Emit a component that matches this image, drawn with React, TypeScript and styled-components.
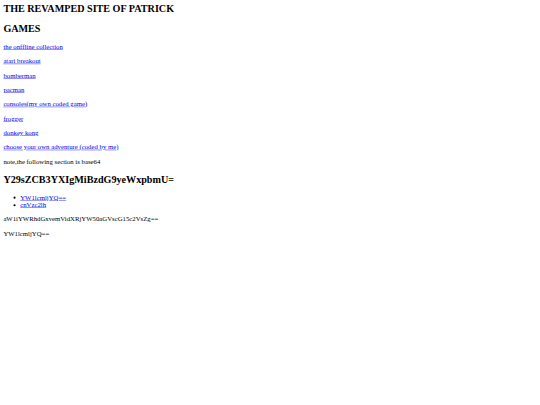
import React from 'react';
import styled, { createGlobalStyle } from 'styled-components';

const GlobalStyle = createGlobalStyle`
  html, body {
    margin: 0;
    background: #ffffff;
  }
`;

const Frame = styled.div`
  width: 540px;
  height: 405px;
  overflow: hidden;
`;

// the reference is a 1280px wide page shown at 540px
const Page = styled.div`
  width: 1280px;
  box-sizing: border-box;
  transform: scale(0.421875);
  transform-origin: 0 0;
  padding: 8px;
  font-family: 'Liberation Serif', 'Times New Roman', serif;
  font-size: 16px;
  color: #000000;
`;

const Title = styled.h1`
  font-size: 24px;
  font-weight: bold;
  margin: 0 0 19.92px;
`;

const Heading = styled.h2`
  font-size: 24px;
  font-weight: bold;
  margin: 19.92px 0;
`;

const Para = styled.p`
  margin: 16px 0;
`;

const Link = styled.a`
  color: #0000ee;
  text-decoration: underline;
`;

const List = styled.ul`
  margin: 16px 0;
  padding-left: 40px;
  list-style: disc;
`;

const games = [
  'the onffline collection',
  'atari breakout',
  'bomberman',
  'pacman',
  'consoles(my own coded game)',
  'frogger',
  'donkey kong',
  'choose your own adventure (coded by me)',
];

const countries = ['YW1lcmljYQ==', 'cnVzc2lh'];

export default function App() {
  return (
    <>
      <GlobalStyle />
      <Frame>
        <Page>
          <Title>THE REVAMPED SITE OF PATRICK</Title>
          <Heading>GAMES</Heading>
          {games.map((game) => (
            <Para key={game}>
              <Link href="#">{game}</Link>
            </Para>
          ))}
          <Para>note,the following section is base64</Para>
          <Heading>Y29sZCB3YXIgMiBzdG9yeWxpbmU=</Heading>
          <List>
            {countries.map((c) => (
              <li key={c}>
                <Link href="#">{c}</Link>
              </li>
            ))}
          </List>
          <Para>aW1iYWRhdGxvemVidXRjYW50aGVscG15c2VsZg==</Para>
          <Para>YW1lcmljYQ==</Para>
        </Page>
      </Frame>
    </>
  );
}
